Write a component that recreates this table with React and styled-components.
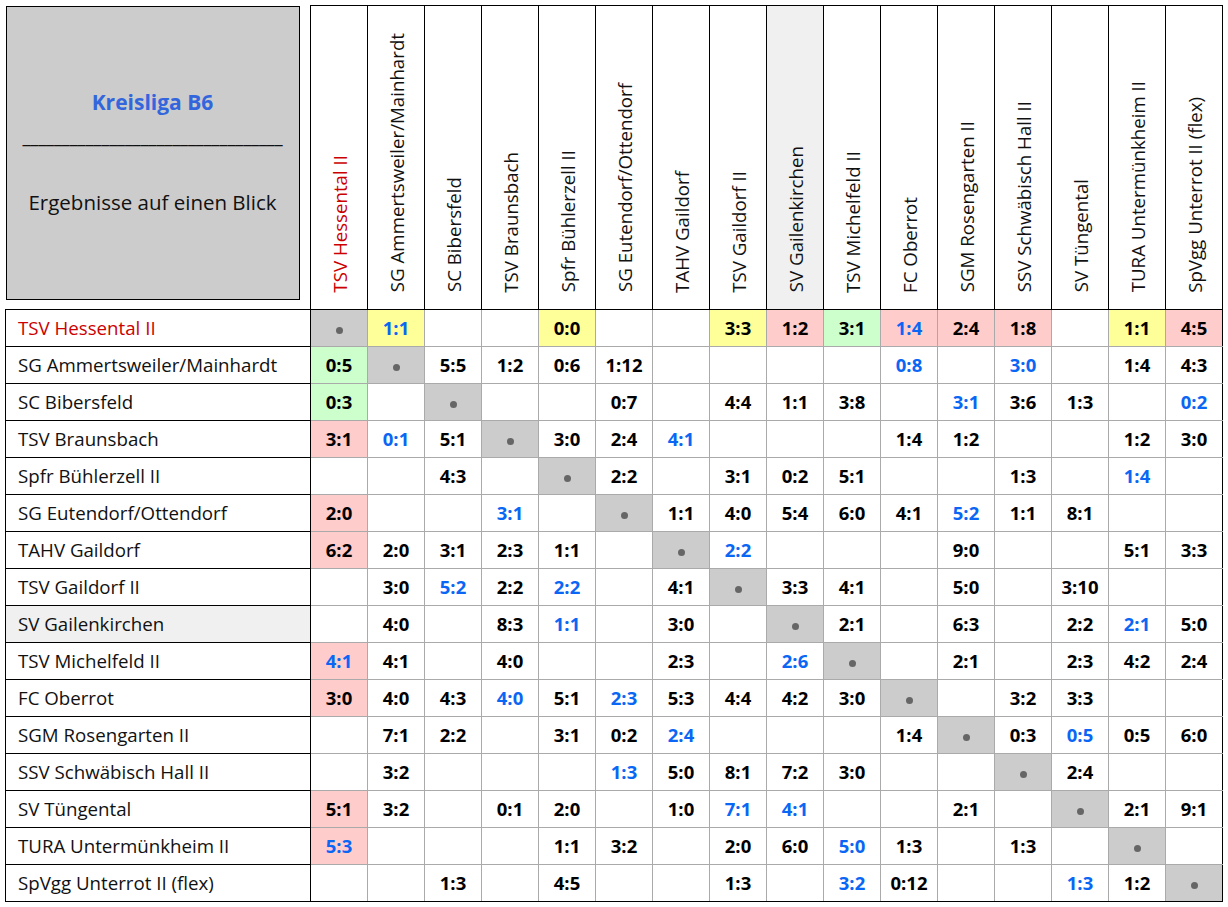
import styled, { createGlobalStyle } from "styled-components";

const TEAMS = [
  "TSV Hessental II",
  "SG Ammertsweiler/Mainhardt",
  "SC Bibersfeld",
  "TSV Braunsbach",
  "Spfr Bühlerzell II",
  "SG Eutendorf/Ottendorf",
  "TAHV Gaildorf",
  "TSV Gaildorf II",
  "SV Gailenkirchen",
  "TSV Michelfeld II",
  "FC Oberrot",
  "SGM Rosengarten II",
  "SSV Schwäbisch Hall II",
  "SV Tüngental",
  "TURA Untermünkheim II",
  "SpVgg Unterrot II (flex)",
];

// y/r/g = Hintergrund, ~ = blau, . = eigenes Feld, - = leer
const RESULTS = [
  ". y~1:1 - - y0:0 - - y3:3 r1:2 g3:1 r~1:4 r2:4 r1:8 - y1:1 r4:5",
  "g0:5 . 5:5 1:2 0:6 1:12 - - - - ~0:8 - ~3:0 - 1:4 4:3",
  "g0:3 - . - - 0:7 - 4:4 1:1 3:8 - ~3:1 3:6 1:3 - ~0:2",
  "r3:1 ~0:1 5:1 . 3:0 2:4 ~4:1 - - - 1:4 1:2 - - 1:2 3:0",
  "- - 4:3 - . 2:2 - 3:1 0:2 5:1 - - 1:3 - ~1:4 -",
  "r2:0 - - ~3:1 - . 1:1 4:0 5:4 6:0 4:1 ~5:2 1:1 8:1 - -",
  "r6:2 2:0 3:1 2:3 1:1 - . ~2:2 - - - 9:0 - - 5:1 3:3",
  "- 3:0 ~5:2 2:2 ~2:2 - 4:1 . 3:3 4:1 - 5:0 - 3:10 - -",
  "- 4:0 - 8:3 ~1:1 - 3:0 - . 2:1 - 6:3 - 2:2 ~2:1 5:0",
  "r~4:1 4:1 - 4:0 - - 2:3 - ~2:6 . - 2:1 - 2:3 4:2 2:4",
  "r3:0 4:0 4:3 ~4:0 5:1 ~2:3 5:3 4:4 4:2 3:0 . - 3:2 3:3 - -",
  "- 7:1 2:2 - 3:1 0:2 ~2:4 - - - 1:4 . 0:3 ~0:5 0:5 6:0",
  "- 3:2 - - - ~1:3 5:0 8:1 7:2 3:0 - - . 2:4 - -",
  "r5:1 3:2 - 0:1 2:0 - 1:0 ~7:1 ~4:1 - - 2:1 - . 2:1 9:1",
  "r~5:3 - - - 1:1 3:2 - 2:0 6:0 ~5:0 1:3 - 1:3 - . -",
  "- - 1:3 - 4:5 - - 1:3 - ~3:2 0:12 - - ~1:3 1:2 .",
];

const BG = { y: "#ffff99", r: "#ffcccc", g: "#ccffcc", s: "#cccccc" };

function parseCell(token) {
  if (token === "-") return { text: "" };
  if (token === ".") return { self: true, bg: "s" };
  let bg;
  let rest = token;
  if ("yrg".includes(rest[0])) {
    bg = rest[0];
    rest = rest.slice(1);
  }
  const blue = rest[0] === "~";
  if (blue) rest = rest.slice(1);
  return { text: rest, bg, blue };
}

const HOME = 0;
const MARKED = 8;

export default function App() {
  return (
    <>
      <GlobalStyle />
      <Styled.Table>
        <colgroup>
          <Styled.Col $w={305} />
          {TEAMS.map((t) => (
            <Styled.Col key={t} $w={57} />
          ))}
        </colgroup>
        <thead>
          <tr>
            <Styled.Corner>
              <Styled.CornerBox>
                <Styled.Title>Kreisliga B6</Styled.Title>
                <Styled.Divider>_________________________________</Styled.Divider>
                <Styled.Subtitle>Ergebnisse auf einen Blick</Styled.Subtitle>
              </Styled.CornerBox>
            </Styled.Corner>
            {TEAMS.map((t, i) => (
              <Styled.HeadCell key={t} $marked={i === MARKED}>
                <Styled.HeadLabel $home={i === HOME}>{t}</Styled.HeadLabel>
              </Styled.HeadCell>
            ))}
          </tr>
        </thead>
        <tbody>
          {RESULTS.map((line, r) => (
            <Styled.Row key={TEAMS[r]}>
              <Styled.TeamCell $home={r === HOME} $marked={r === MARKED}>
                {TEAMS[r]}
              </Styled.TeamCell>
              {line.split(" ").map((tok, c) => {
                const cell = parseCell(tok);
                return (
                  <Styled.ScoreCell key={c} $bg={BG[cell.bg]} $blue={cell.blue}>
                    {cell.self ? <Styled.Dot /> : cell.text}
                  </Styled.ScoreCell>
                );
              })}
            </Styled.Row>
          ))}
        </tbody>
      </Styled.Table>
    </>
  );
}

const GlobalStyle = createGlobalStyle`
  body {
    margin: 0;
    background: #fff;
    font-family: "Open Sans", "Noto Sans", sans-serif;
    color: #111;
  }
`;

const Styled = {
  Table: styled.table`
    margin: 5px;
    border-collapse: collapse;
    table-layout: fixed;
    width: 1218px;
  `,

  Col: styled.col`
    width: ${(p) => p.$w}px;
  `,

  Corner: styled.th`
    padding: 0;
    height: 303px;
    vertical-align: top;
    text-align: left;
    border: none;
  `,

  CornerBox: styled.div`
    box-sizing: border-box;
    width: 294px;
    height: 294px;
    padding-top: 81px;
    border: 1px solid #000;
    background: #cccccc;
    display: flex;
    flex-direction: column;
    align-items: center;
    font-weight: normal;
  `,

  Title: styled.div`
    font-size: 21px;
    line-height: 28px;
    font-weight: bold;
    color: #3366dd;
  `,

  Divider: styled.div`
    margin-top: 11px;
    font-size: 18px;
    line-height: 18px;
    color: #111;
  `,

  Subtitle: styled.div`
    margin-top: 43px;
    font-size: 20.5px;
    line-height: 28px;
    color: #111;
  `,

  HeadCell: styled.th`
    border: 1px solid #000;
    padding: 0 0 11px;
    vertical-align: bottom;
    text-align: center;
    font-weight: normal;
    background: ${(p) => (p.$marked ? "#f0f0f0" : "#fff")};
  `,

  HeadLabel: styled.div`
    display: inline-block;
    writing-mode: vertical-rl;
    transform: rotate(180deg);
    font-size: 18.7px;
    white-space: nowrap;
    color: ${(p) => (p.$home ? "#cc0000" : "#111")};
  `,

  Row: styled.tr`
    height: 37px;

    &:last-child td {
      border-bottom-color: #000;
    }
  `,

  TeamCell: styled.td`
    border: 1px solid #000;
    padding: 0 0 0 12px;
    font-size: 18.7px;
    white-space: nowrap;
    color: ${(p) => (p.$home ? "#cc0000" : "#111")};
    background: ${(p) => (p.$marked ? "#f0f0f0" : "#fff")};
  `,

  ScoreCell: styled.td`
    border: 1px solid #aaaaaa;
    padding: 0;
    text-align: center;
    font-size: 18.5px;
    font-weight: bold;
    color: ${(p) => (p.$blue ? "#0a66f5" : "#000")};
    background: ${(p) => p.$bg || "#fff"};

    &:last-child {
      border-right-color: #000;
    }
  `,

  Dot: styled.span`
    display: inline-block;
    width: 7px;
    height: 7px;
    border-radius: 50%;
    background: #666;
    vertical-align: middle;
  `,
};
